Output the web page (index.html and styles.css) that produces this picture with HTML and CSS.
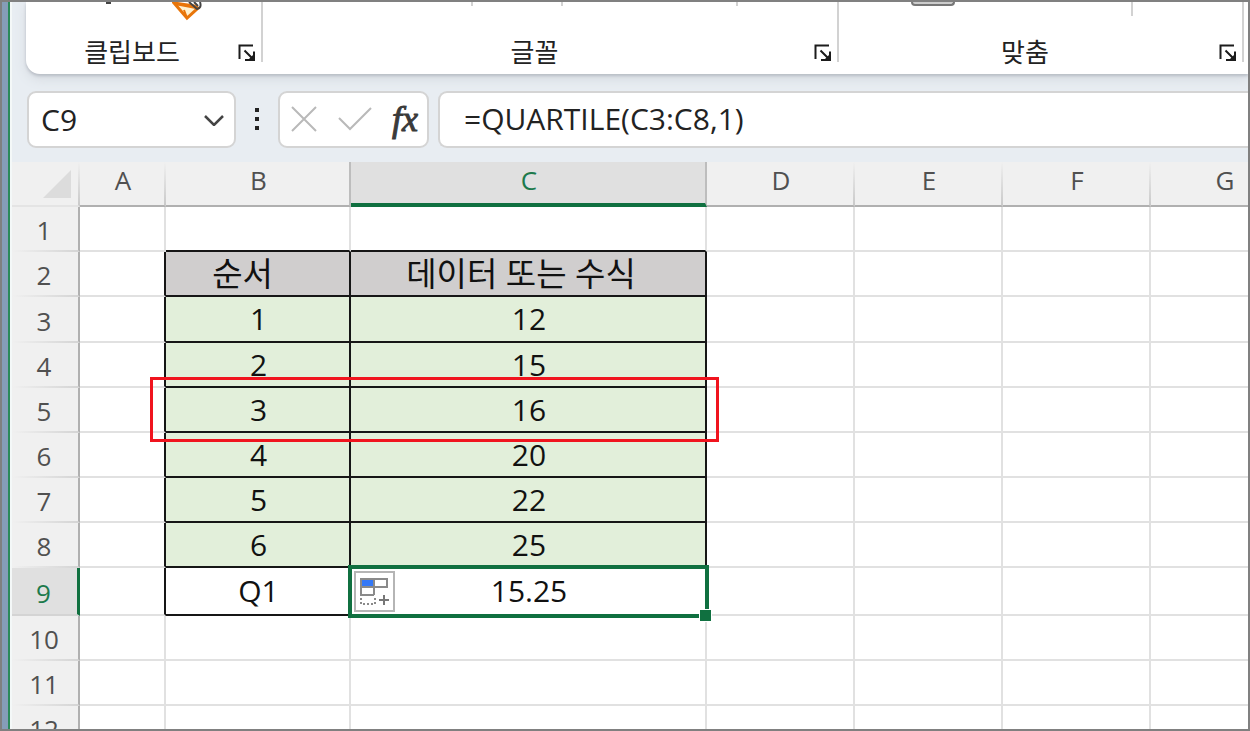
FILE: index.html
```html
<!DOCTYPE html>
<html lang="ko">
<head>
<meta charset="utf-8">
<title>QUARTILE</title>
<link rel="stylesheet" href="styles.css">
</head>
<body>
<div class="window">
  <svg class="defs" aria-hidden="true">
    <symbol id="launcher" viewBox="0 0 18 18">
      <path d="M1.500 15V1.500H15M6.500 6.500L15 15M16 7.500V16H7" fill="none" stroke="#1c1c1c" stroke-width="2"/>
      <path d="M10 16H16V10Z" fill="#1c1c1c"/>
    </symbol>
  </svg>
  <header class="ribbon">
    <section class="group clipboard">
      <svg class="peek painter" viewBox="0 0 30 19" aria-hidden="true">
        <path d="M2 1L15 16L26 6L22 4Z" fill="#fff1cf" stroke="#e8750a" stroke-width="3"/>
        <path d="M3 2L24 6M15 16L12 8" stroke="#e8750a" stroke-width="2"/>
        <path d="M17 0L25 7Q30 6 28 0M22 0L26 4" fill="none" stroke="#444" stroke-width="2"/>
      </svg>
      <span class="peek dot"></span>
      <h2>클립보드</h2>
      <button class="launch" aria-label="클립보드 설정"><svg><use href="#launcher"/></svg></button>
    </section>
    <section class="group font">
      <span class="peek tick t1"></span><span class="peek tick t2"></span><span class="peek tick t3"></span>
      <h2>글꼴</h2>
      <button class="launch" aria-label="글꼴 설정"><svg><use href="#launcher"/></svg></button>
    </section>
    <section class="group align">
      <span class="peek pill"></span><span class="peek tick t4"></span>
      <h2>맞춤</h2>
      <button class="launch" aria-label="맞춤 설정"><svg><use href="#launcher"/></svg></button>
    </section>
  </header>
  <div class="formula-bar">
    <div class="box name-box">
      <input aria-label="이름 상자" value="C9">
      <button aria-label="이름 목록"><svg width="22" height="14" viewBox="0 0 22 14"><path d="M2 4L11 13L20 4" fill="none" stroke="#444" stroke-width="2.500"/></svg></button>
    </div>
    <svg class="grip" width="6" height="24" viewBox="0 0 6 24" aria-hidden="true"><path d="M1 1h4v4h-4zM1 10h4v4h-4zM1 19h4v4h-4z" fill="#222"/></svg>
    <div class="box actions">
      <button aria-label="취소"><svg width="26" height="26" viewBox="0 0 26 26"><path d="M1 1L25 25M25 1L1 25" fill="none" stroke="#b9b9b9" stroke-width="2"/></svg></button>
      <button aria-label="입력"><svg width="34" height="24" viewBox="0 0 34 24"><path d="M1 11L12 22L33 1" fill="none" stroke="#b9b9b9" stroke-width="2"/></svg></button>
      <button class="fx" aria-label="함수 삽입">fx</button>
    </div>
    <div class="box formula"><input aria-label="수식 입력줄" value="=QUARTILE(C3:C8,1)"></div>
  </div>
  <main class="sheet">
    <table>
      <colgroup><col class="c-head"><col class="c-a"><col class="c-b"><col class="c-c"><col class="c-n"><col class="c-n"><col class="c-n"><col class="c-n"></colgroup>
      <thead>
        <tr><th class="corner"><svg width="28" height="28" viewBox="0 0 28 28" aria-hidden="true"><path d="M28 0V28H0Z" fill="#dcdcdc"/></svg></th><th>A</th><th class="beside">B</th><th class="current">C</th><th>D</th><th>E</th><th>F</th><th>G</th></tr>
      </thead>
      <tbody>
        <tr><th>1</th><td></td><td class="above"></td><td class="above"></td><td></td><td></td><td></td><td></td></tr>
        <tr><th>2</th><td class="before"></td><td class="cell title order">순서</td><td class="cell title formula-title">데이터 또는 수식</td><td></td><td></td><td></td><td></td></tr>
        <tr class="tall"><th>3</th><td class="before"></td><td class="cell data">1</td><td class="cell data">12</td><td></td><td></td><td></td><td></td></tr>
        <tr><th>4</th><td class="before"></td><td class="cell data">2</td><td class="cell data">15</td><td></td><td></td><td></td><td></td></tr>
        <tr><th>5</th><td class="before"></td><td class="cell data">3<span class="marker"></span></td><td class="cell data">16</td><td></td><td></td><td></td><td></td></tr>
        <tr><th>6</th><td class="before"></td><td class="cell data">4</td><td class="cell data">20</td><td></td><td></td><td></td><td></td></tr>
        <tr><th>7</th><td class="before"></td><td class="cell data">5</td><td class="cell data">22</td><td></td><td></td><td></td><td></td></tr>
        <tr><th>8</th><td class="before"></td><td class="cell data">6</td><td class="cell data">25</td><td></td><td></td><td></td><td></td></tr>
        <tr class="result"><th class="current">9</th><td class="before"></td><td class="cell">Q1</td><td class="cell active">15.25<span class="selection"></span><span class="handle"></span>
          <button class="autofill" aria-label="자동 채우기 옵션"><svg width="30" height="30" viewBox="0 0 30 30">
            <path d="M1 2H27V10H1ZM14 2V18M1 10V18H14" fill="none" stroke="#8a8a8a" stroke-width="2"/>
            <path d="M2 3H13V9H2Z" fill="#3478f6"/>
            <path d="M1 21V27H15V21" fill="none" stroke="#8a8a8a" stroke-width="2" stroke-dasharray="2 2"/>
            <path d="M19 23H29M24 18V28" stroke="#777" stroke-width="2"/></svg></button></td><td></td><td></td><td></td><td></td></tr>
        <tr><th>10</th><td></td><td></td><td></td><td></td><td></td><td></td><td></td></tr>
        <tr><th>11</th><td></td><td></td><td></td><td></td><td></td><td></td><td></td></tr>
        <tr><th>12</th><td></td><td></td><td></td><td></td><td></td><td></td><td></td></tr>
      </tbody>
    </table>
  </main>
</div>
</body>
</html>
```
FILE: styles.css
```css
* { box-sizing: border-box; }
body {
  margin: 0;
  height: 100vh;
  padding: 2px;
  background: #808080;
  font-family: "Open Sans", "Noto Sans CJK KR", sans-serif;
  color: #222;
}
.window {
  height: 100%;
  overflow: hidden;
  display: flex;
  flex-direction: column;
  background: linear-gradient(to right, #869db8 6px, #2b8a5a 6px, #2b8a5a 8px, #f4f8f8 8px, #f4f8f8 10px, #e8edf2 10px);
}
.defs { display: none; }
button, input { font: inherit; color: inherit; border: 0; background: none; padding: 0; margin: 0; }
button { display: flex; align-items: center; justify-content: center; }

.ribbon {
  flex: none;
  display: flex;
  height: 72px;
  margin-left: 24px;
  background: #fff;
  border-bottom-left-radius: 14px;
  box-shadow: 0 2px 3px #b9bec6, 0 5px 12px #d5dae0;
}
.group {
  position: relative;
  display: flex;
  align-items: flex-end;
  padding: 0 6px 8px 0;
}
.group::after {
  content: "";
  position: absolute;
  right: 0;
  top: 0;
  width: 2px;
  height: 60px;
  background: #d2d2d2;
}
.clipboard { flex: 0 0 237px; }
.font { flex: 0 0 576px; }
.align { flex: 0 0 405px; }
.group h2 {
  flex: 1;
  margin: 0;
  text-align: center;
  font-size: 26px;
  line-height: 28px;
  font-weight: 400;
}
.font h2, .align h2 { padding-right: 8px; }
.launch { width: 18px; height: 18px; margin: 0 1px 4px 0; }
.launch svg { width: 18px; height: 18px; }
.peek { position: absolute; top: 0; }
.painter { left: 146px; width: 30px; height: 19px; }
.dot { left: 80px; width: 5px; height: 2px; background: #444; }
.tick { width: 2px; height: 4px; background: #d2d2d2; }
.t1 { left: 208px; }
.t2 { left: 298px; }
.t3 { left: 473px; }
.t4 { left: 292px; height: 14px; }
.pill { left: 72px; width: 44px; height: 4px; border: 2px solid #777; border-top: 0; border-radius: 0 0 6px 6px; background: #ccc; }

.formula-bar {
  flex: none;
  display: flex;
  align-items: center;
  height: 88px;
  margin-left: 25px;
  padding-top: 2px;
  z-index: 0;
}
.box {
  display: flex;
  align-items: center;
  height: 57px;
  background: #fff;
  border: 2px solid #d4d4d4;
  border-radius: 9px;
}
.name-box { width: 209px; padding: 0 9px 0 12px; font-size: 30px; }
.name-box input { flex: 1; min-width: 0; }
.grip { margin: 0 18px; }
.actions { width: 151px; padding: 0 9px 0 11px; justify-content: space-between; }
.fx { font: italic 400 36px/44px "Liberation Serif", serif; color: #3a3a3a; -webkit-text-stroke: 1px #3a3a3a; }
.formula { flex: 1; margin-left: 9px; padding: 0 0 2px 24px; border-right: 0; border-radius: 9px 0 0 9px; font-size: 30px; }
.formula input { width: 100%; }

.sheet { flex: 1; min-height: 0; margin-left: 10px; overflow: hidden; background: #fff; }
table { width: 1287px; table-layout: fixed; border-collapse: separate; border-spacing: 0; }
.c-head { width: 68px; }
.c-a { width: 86px; }
.c-b { width: 185px; }
.c-c { width: 356px; }
.c-n { width: 148px; }
th, td { height: 45px; padding: 0 0 0 2px; text-align: center; vertical-align: middle; border: 0 solid #e1e1e1; border-width: 0 2px 2px 0; }
th { background: #f0f0f0; color: #505050; font-size: 26px; line-height: 34px; font-weight: 400; }
thead th {
  padding-bottom: 8px;
  border-color: transparent transparent #b0b0b0;
  background: linear-gradient(#f0f0f0, #c8c8c8) right / 2px 100% no-repeat border-box #f0f0f0;
}
thead .corner { padding: 0 7px 0 0; border-bottom-color: #e4e4e4; }
.corner svg { display: block; margin: 0 0 0 auto; }
tbody th {
  padding: 3px 2px 0 0;
  border-color: transparent #b0b0b0 transparent transparent;
  background: linear-gradient(to right, #f0f0f0, #d4d4d4) bottom / 100% 2px no-repeat border-box #f0f0f0;
}
thead .beside { border-right-color: #bdbdbd; }
th.current { background: #e0e0e0; color: #1d7a4c; }
thead .current { border-right-color: #bdbdbd; border-bottom: 4px solid #107040; padding-bottom: 6px; }
tbody .current { border-right: 3px solid #107040; border-bottom-color: #d4d4d4; }
.tall th, .tall td { height: 46px; }
.result th, .result td { height: 48px; }
td { font-size: 30px; line-height: 40px; }
.cell { position: relative; border-color: #161616; color: #111; }
.above { border-bottom-color: #161616; }
.before { border-right-color: #161616; }
.title { background: #d0cece; font-size: 33px; }
.order { padding-right: 32px; }
.formula-title { padding-right: 16px; }
.data { background: #e2efda; }
.marker {
  position: absolute;
  z-index: 2;
  left: -16px;
  top: -11px;
  width: 569px;
  height: 65px;
  border: 3px solid #f0141e;
}
.selection { position: absolute; inset: -3px -4px -4px -3px; border: 4px solid #107040; }
.handle { position: absolute; right: -7px; bottom: -8px; width: 13px; height: 13px; background: #107040; border: 1px solid #fff; }
.autofill { position: absolute; left: 3px; top: 3px; width: 41px; height: 41px; background: #fff; border: 2px solid #b5b5b5; }
```
